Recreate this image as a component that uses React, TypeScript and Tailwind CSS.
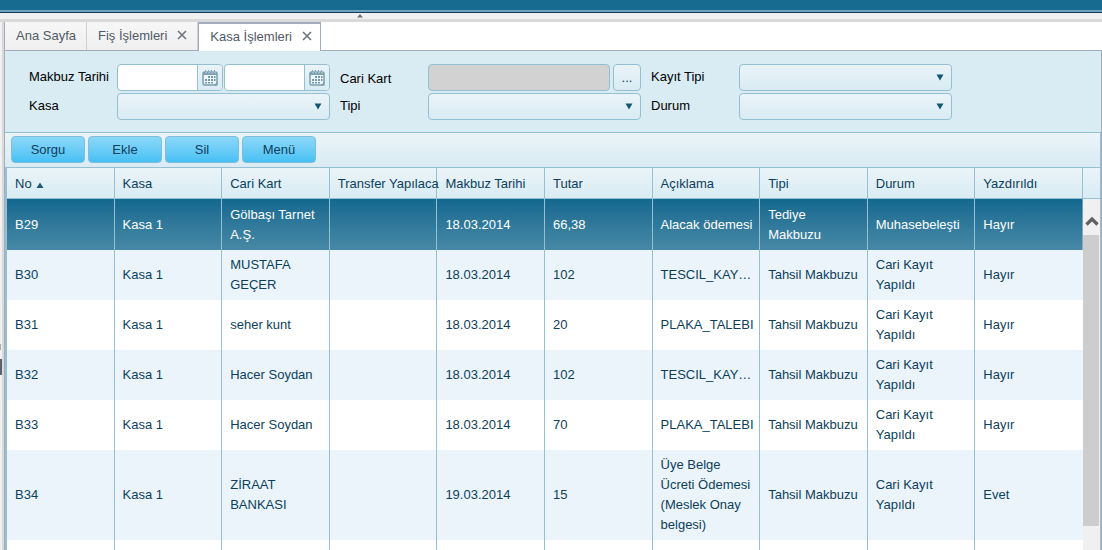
import React, { useState } from 'react';

type Receipt = {
  no: string;
  kasa: string;
  cari: string;
  transfer?: string;
  tarih: string;
  tutar: string;
  aciklama: string;
  tipi: string;
  durum: string;
  yazdirildi: string;
};

const columns = ['No', 'Kasa', 'Cari Kart', 'Transfer Yapılaca', 'Makbuz Tarihi', 'Tutar', 'Açıklama', 'Tipi', 'Durum', 'Yazdırıldı'];

const receipts: Receipt[] = [
  { no: 'B29', kasa: 'Kasa 1', cari: 'Gölbaşı Tarnet A.Ş.', tarih: '18.03.2014', tutar: '66,38', aciklama: 'Alacak ödemesi', tipi: 'Tediye Makbuzu', durum: 'Muhasebeleşti', yazdirildi: 'Hayır' },
  { no: 'B30', kasa: 'Kasa 1', cari: 'MUSTAFA GEÇER', tarih: '18.03.2014', tutar: '102', aciklama: 'TESCIL_KAY…', tipi: 'Tahsil Makbuzu', durum: 'Cari Kayıt Yapıldı', yazdirildi: 'Hayır' },
  { no: 'B31', kasa: 'Kasa 1', cari: 'seher kunt', tarih: '18.03.2014', tutar: '20', aciklama: 'PLAKA_TALEBI', tipi: 'Tahsil Makbuzu', durum: 'Cari Kayıt Yapıldı', yazdirildi: 'Hayır' },
  { no: 'B32', kasa: 'Kasa 1', cari: 'Hacer Soydan', tarih: '18.03.2014', tutar: '102', aciklama: 'TESCIL_KAY…', tipi: 'Tahsil Makbuzu', durum: 'Cari Kayıt Yapıldı', yazdirildi: 'Hayır' },
  { no: 'B33', kasa: 'Kasa 1', cari: 'Hacer Soydan', tarih: '18.03.2014', tutar: '70', aciklama: 'PLAKA_TALEBI', tipi: 'Tahsil Makbuzu', durum: 'Cari Kayıt Yapıldı', yazdirildi: 'Hayır' },
  { no: 'B34', kasa: 'Kasa 1', cari: 'ZİRAAT BANKASI', tarih: '19.03.2014', tutar: '15', aciklama: 'Üye Belge Ücreti Ödemesi (Meslek Onay belgesi)', tipi: 'Tahsil Makbuzu', durum: 'Cari Kayıt Yapıldı', yazdirildi: 'Evet' },
];

const CalendarIcon = () => (
  <svg width="16" height="16" viewBox="0 0 16 16" aria-hidden="true">
    <rect x="1" y="2" width="14" height="13" rx="1.5" fill="#eef6fa" stroke="#7a9fae" strokeWidth="1.5" />
    <path d="M1 2h14v3H1z" fill="#7a9fae" />
    <path d="M3.5 0v4M6.500 0v4M9.500 0v4M12.500 0v4" stroke="#7a9fae" />
    <path d="M4 1.500v2M7 1.500v2M10 1.500v2M13 1.500v2" stroke="#dcebf2" strokeWidth=".8" />
    <path d="M6 6h2v2H6zM9 6h2v2H9zM12 6h1.500v2H12zM3 9h2v2H3zM6 9h2v2H6zM9 9h2v2H9zM12 9h1.500v2H12zM3 12h2v1.500H3zM6 12h2v1.500H6zM9 12h2v1.500H9z" fill="#7396a8" />
    <path d="M15.500 11.500v4h-4z" fill="#7a9fae" />
  </svg>
);

const DateField = ({ label }: { label: string }) => (
  <div className="flex h-[27px] flex-1 rounded border border-[#94c0d2] bg-white">
    <input type="text" aria-label={label} className="w-full min-w-0 flex-1 rounded-l px-2 outline-none" />
    <button
      type="button"
      aria-label={`${label} seç`}
      className="flex w-[25px] items-center justify-center rounded-r border-l border-[#94c0d2] bg-linear-to-b from-[#eaf4f9] to-[#d9ebf3]"
    >
      <CalendarIcon />
    </button>
  </div>
);

const SelectField = ({ id }: { id: string }) => (
  <div className="relative">
    <select
      id={id}
      className="block h-[27px] w-full appearance-none rounded border border-[#94c0d2] bg-linear-to-b from-[#eaf4f9] to-[#d9ebf3] px-2 outline-none"
    >
      <option value=""></option>
    </select>
    <svg className="pointer-events-none absolute top-[10px] right-2" width="8" height="7" viewBox="0 0 8 7" aria-hidden="true">
      <path d="M.5.5h7L4 6.5z" fill="#125873" />
    </svg>
  </div>
);

const Tab = ({ title, active, closable }: { title: string; active?: boolean; closable?: boolean }) => (
  <div
    className={
      active
        ? '-mb-px flex h-[29px] items-center gap-[6px] border-x border-t-2 border-[#a3abbd] bg-white pr-2 pb-[2px] pl-[11px]'
        : 'flex h-7 items-center gap-[6px] border-r border-[#d0d0d0] bg-linear-to-b from-[#f7f7f7] to-[#efefef] pr-[10px] pl-[11px] last:border-r-0'
    }
  >
    <button type="button" role="tab" aria-selected={!!active}>
      {title}
    </button>
    {closable && (
      <button type="button" aria-label={`${title} kapat`} className="pb-[2px] pl-1">
        <svg width="10" height="10" viewBox="0 0 10 10" aria-hidden="true">
          <path d="M1 1l8 8M9 1L1 9" stroke="#6d747e" strokeWidth="1.6" />
        </svg>
      </button>
    )}
  </div>
);

const App: React.FC = () => {
  const [selected, setSelected] = useState('B29');

  return (
    <div className="flex h-screen flex-col overflow-hidden bg-white font-['Liberation_Sans',Arial,sans-serif] text-[13px] leading-5 text-black">
      {/* Top bar and splitter */}
      <header className="flex h-[13px] shrink-0 flex-col justify-end border-b border-[#12395a] bg-[#176a90]">
        <div className="h-[2px] bg-[#6fa3bd]" />
      </header>
      <div className="flex h-[9px] shrink-0 justify-center border-b-[3px] border-[#d9d9d9] bg-[#f1f1f1] pr-[382px]">
        <svg width="6" height="5" viewBox="0 0 6 5" aria-hidden="true">
          <path d="M0 4.5h6L3 1z" fill="#6a717a" />
        </svg>
      </div>

      <div className="flex min-h-0 flex-1">
        <div className="flex w-1 shrink-0 flex-col justify-center gap-[9px] border-r-2 border-[#d9d9d9] bg-[#f1f1f1] pt-[146px]">
          <div className="h-[6px] w-px bg-[#a5a9b0]" />
          <div className="h-4 bg-[#5c6370]" />
        </div>

        <main className="flex min-w-0 flex-1 flex-col">
          {/* Tabs */}
          <div role="tablist" className="flex h-[29px] shrink-0 items-end border-b border-l border-[#a3abbd] text-[#4f5a68]">
            <Tab title="Ana Sayfa" />
            <Tab title="Fiş İşlemleri" closable />
            <Tab title="Kasa İşlemleri" active closable />
          </div>

          <div className="flex min-h-0 flex-1 flex-col border-x border-[#a3abbd] bg-[#d9ebf3]">
            {/* Filters */}
            <form className="flex shrink-0 gap-x-[10px] pt-[13px] pb-3 pl-6">
              <div className="grid grid-cols-[88px_213px] gap-y-[2px]">
                <span className="pt-[3px]">Makbuz Tarihi</span>
                <div className="flex gap-px">
                  <DateField label="Başlangıç tarihi" />
                  <DateField label="Bitiş tarihi" />
                </div>
                <label htmlFor="kasa" className="pt-[3px]">Kasa</label>
                <SelectField id="kasa" />
              </div>
              <div className="grid grid-cols-[88px_213px] gap-y-[2px]">
                <label htmlFor="cari" className="pt-[5px]">Cari Kart</label>
                <div className="flex gap-[3px]">
                  <input id="cari" type="text" disabled className="h-[27px] w-full min-w-0 flex-1 rounded border border-[#94c0d2] bg-[#d2d2d2] px-2" />
                  <button type="button" className="h-[27px] w-7 rounded border border-[#94c0d2] bg-linear-to-b from-[#eaf4f9] to-[#d9ebf3] text-[#0b3a55]">
                    ...
                  </button>
                </div>
                <label htmlFor="tipi" className="pt-[3px]">Tipi</label>
                <SelectField id="tipi" />
              </div>
              <div className="grid grid-cols-[88px_213px] gap-y-[2px]">
                <label htmlFor="kayit" className="pt-[3px]">Kayıt Tipi</label>
                <SelectField id="kayit" />
                <label htmlFor="durum" className="pt-[3px]">Durum</label>
                <SelectField id="durum" />
              </div>
            </form>

            <section className="flex min-h-0 flex-1 flex-col border-t border-r border-[#94c0d2] text-[#0d3f5c]">
              {/* Toolbar */}
              <div className="flex h-[34px] shrink-0 items-start gap-[3px] bg-linear-to-b from-[#eaf4f9] to-[#d9ebf3] pt-[3px] pl-[6px]">
                {['Sorgu', 'Ekle', 'Sil', 'Menü'].map((name) => (
                  <button
                    key={name}
                    type="button"
                    className="h-[27px] w-[74px] rounded border border-[#7fbdd8] bg-linear-to-b from-[#8bd8f8] to-[#45c0f4]"
                  >
                    {name}
                  </button>
                ))}
              </div>

              {/* Receipts */}
              <div className="flex min-h-0 flex-1 border-t border-l-2 border-[#94c0d2]">
                <div className="min-w-0 flex-1 overflow-hidden bg-white">
                  <table className="w-full table-fixed border-separate border-spacing-0 text-left">
                    <thead>
                      <tr className="h-[31px] bg-linear-to-b from-[#eaf4f9] to-[#d9ebf3]">
                        {columns.map((col) => (
                          <th key={col} className="border-r border-b border-[#94c0d2] p-0 pt-[2px] pl-2 font-normal whitespace-nowrap">
                            {col}
                            {col === 'No' && (
                              <svg className="ml-1 inline" width="8" height="6" viewBox="0 0 8 6" aria-hidden="true">
                                <path d="M.5 6L4 .5 7.5 6z" fill="#1c5a75" />
                              </svg>
                            )}
                          </th>
                        ))}
                      </tr>
                    </thead>
                    <tbody>
                      {receipts.map((r) => (
                        <tr
                          key={r.no}
                          onClick={() => setSelected(r.no)}
                          className={
                            r.no === selected
                              ? 'h-[51px] bg-linear-to-b from-[#12688f] to-[#4789a6] text-white'
                              : 'h-[50px] odd:bg-white even:bg-[#eaf4fa]'
                          }
                        >
                          {[r.no, r.kasa, r.cari, r.transfer, r.tarih, r.tutar, r.aciklama, r.tipi, r.durum, r.yazdirildi].map((value, i) => (
                            <td key={i} className="border-r border-[#94c0d2] py-[5px] pr-[6px] pl-2 last:border-r-0">
                              {value}
                            </td>
                          ))}
                        </tr>
                      ))}
                      <tr className="h-[50px] bg-white">
                        {columns.map((col) => (
                          <td key={col} className="border-r border-[#94c0d2] last:border-r-0" />
                        ))}
                      </tr>
                    </tbody>
                  </table>
                </div>
                {/* Scroll bar */}
                <div className="flex w-[17px] shrink-0 flex-col bg-[#f0f0f0]">
                  <div className="h-[31px] shrink-0 border-b border-[#94c0d2] bg-linear-to-b from-[#eaf4f9] to-[#d9ebf3]" />
                  <button type="button" aria-label="Yukarı kaydır" className="flex h-9 shrink-0 items-center justify-center pt-2">
                    <svg width="14" height="10" viewBox="0 0 14 10" aria-hidden="true">
                      <path d="M1.500 8.500L7 3l5.500 5.500" fill="none" stroke="#606060" strokeWidth="3.2" />
                    </svg>
                  </button>
                  <div className="mr-px mb-6 flex-1 bg-[#cdcdcd]" />
                </div>
              </div>
            </section>
          </div>
        </main>
      </div>
    </div>
  );
};

export default App;
